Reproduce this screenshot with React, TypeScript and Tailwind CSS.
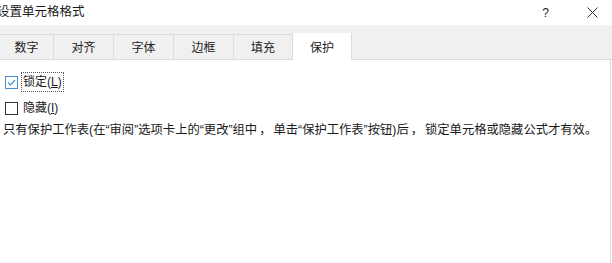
import React from 'react';

const tabs = [
  { label: '数字', w: 'w-[53px]' },
  { label: '对齐', w: 'w-[60px]' },
  { label: '字体', w: 'w-[60px]' },
  { label: '边框', w: 'w-[60px]' },
  { label: '填充', w: 'w-[59px]' },
];

function CheckBox({ checked }: { checked?: boolean }) {
  return (
    <span
      className={
        checked
          ? 'w-[13px] h-[13px] border border-[#4a8fd6] bg-white flex items-center justify-center shrink-0'
          : 'w-[13px] h-[13px] border border-[#333333] bg-white flex items-center justify-center shrink-0'
      }
    >
      {checked && (
        <svg width="11" height="11" viewBox="0 0 11 11">
          <path d="M2 5.5 L4.5 8 L9 3" fill="none" stroke="#4a8fd6" strokeWidth="1.2" />
        </svg>
      )}
    </span>
  );
}

export default function App() {
  return (
    <div
      className="w-[612px] h-[263px] bg-white overflow-hidden flex flex-col text-[#1a1a1a]"
      style={{ fontFamily: '"Liberation Sans", "Noto Sans CJK SC", sans-serif' }}
    >
      {/* Title bar */}
      <div className="h-[25px] flex items-center shrink-0">
        <span className="ml-[-3px] text-[12.5px]">设置单元格格式</span>
        <span className="ml-auto mr-[38px] text-[12px]">?</span>
        <svg width="11" height="11" viewBox="0 0 11 11" className="mr-[14px]">
          <path d="M0.5 0.5 L10.5 10.5 M10.5 0.5 L0.5 10.5" stroke="#333" strokeWidth="1" />
        </svg>
      </div>

      {/* Tab strip */}
      <div className="h-[35px] bg-[#f0f0f0] flex items-end shrink-0">
        {tabs.map((t, i) => (
          <div
            key={t.label}
            className={`${t.w} h-[26px] pt-[2px] border-t border-[#dcdcdc] ${i > 0 ? 'border-l' : ''} border-b flex items-center justify-center text-[12px] text-[#222]`}
          >
            {t.label}
          </div>
        ))}
        <div className="w-[60px] h-[27px] pt-[2px] bg-white border-l border-r border-[#dcdcdc] flex items-center justify-center text-[12px] text-[#222]">
          保护
        </div>
        <div className="flex-1 h-[1px] bg-[#dcdcdc]" />
      </div>

      {/* Panel */}
      <div className="flex-1 w-[611px] border-r border-[#dcdcdc] pt-[12px]">
        <div className="flex flex-col gap-[6px]">
          <label className="flex items-center h-[20px] pl-[5px]">
            <CheckBox checked />
            <span className="ml-[3px] px-[1px] border border-dotted border-[#555] text-[12px] leading-[18px]">
              锁定(<span className="underline">L</span>)
            </span>
          </label>
          <label className="flex items-center h-[20px] pl-[5px]">
            <CheckBox />
            <span className="ml-[4px] px-[1px] text-[12px] leading-[18px]">
              隐藏(<span className="underline">I</span>)
            </span>
          </label>
        </div>
        <p className="mt-[3px] pl-[3px] text-[12.3px] leading-[18px] whitespace-nowrap">
          只有保护工作表(在“审阅”选项卡上的“更改”组中<span className="px-[2px]">，</span>单击“保护工作表”按钮)后<span className="px-[2px]">，</span>锁定单元格或隐藏公式才有效。
        </p>
      </div>
    </div>
  );
}
